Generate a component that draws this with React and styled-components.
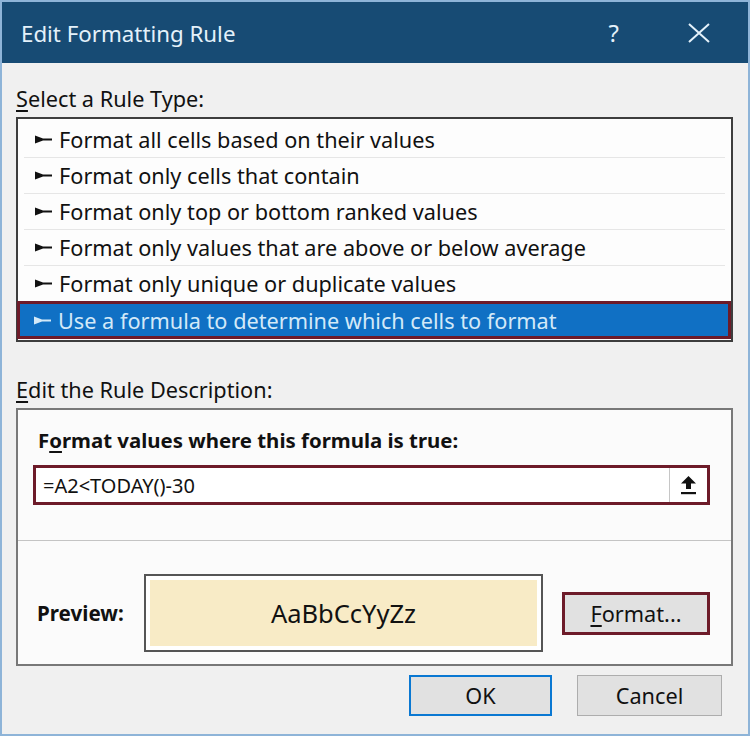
import React from 'react';
import styled, { createGlobalStyle } from 'styled-components';

const GlobalStyle = createGlobalStyle`
  html, body {
    margin: 0;
    padding: 0;
    background: #ffffff;
  }
  body {
    font-family: "Noto Sans", "Open Sans", sans-serif;
  }
`;

const ruleTypes = [
  'Format all cells based on their values',
  'Format only cells that contain',
  'Format only top or bottom ranked values',
  'Format only values that are above or below average',
  'Format only unique or duplicate values',
  'Use a formula to determine which cells to format',
];

const Arrow = () => (
  <svg width="17" height="9" viewBox="0 0 17 9">
    <polygon points="0,0.5 8,3.5 17,3.5 17,5.5 8,5.5 0,8.5" fill="currentColor" />
  </svg>
);

const UploadIcon = () => (
  <svg width="17" height="19" viewBox="0 0 17 19">
    <polygon points="8.5,0 16,7.5 11,7.5 11,13 6,13 6,7.5 1,7.5" fill="#111" />
    <rect x="1" y="16" width="15" height="2.2" fill="#111" />
  </svg>
);

const CloseIcon = () => (
  <svg width="22" height="20" viewBox="0 0 22 20">
    <path d="M1 1 L21 19 M21 1 L1 19" stroke="#e4f1fa" strokeWidth="2" fill="none" />
  </svg>
);

const App = () => {
  return (
    <>
      <GlobalStyle />
      <Dialog>
        <TitleBar>
          <Title>Edit Formatting Rule</Title>
          <TitleButtons>
            <Help>?</Help>
            <CloseIcon />
          </TitleButtons>
        </TitleBar>
        <Body>
          <Label>
            <Key>S</Key>elect a Rule Type:
          </Label>
          <RuleList>
            {ruleTypes.map((text, i) => (
              <RuleRow key={text} selected={i === ruleTypes.length - 1}>
                <Arrow />
                <span>{text}</span>
              </RuleRow>
            ))}
          </RuleList>
          <Label $gap>
            <Key>E</Key>dit the Rule Description:
          </Label>
          <DescBox>
            <BoldLabel>
              F<Key>o</Key>rmat values where this formula is true:
            </BoldLabel>
            <FormulaInput>
              <FormulaText>=A2&lt;TODAY()-30</FormulaText>
              <RefButton>
                <UploadIcon />
              </RefButton>
            </FormulaInput>
            <Separator />
            <PreviewRow>
              <PreviewLabel>Preview:</PreviewLabel>
              <PreviewBox>
                <PreviewFill>AaBbCcYyZz</PreviewFill>
              </PreviewBox>
              <Button $variant="marked">
                <Key>F</Key>ormat...
              </Button>
            </PreviewRow>
          </DescBox>
          <Footer>
            <Button $variant="default">OK</Button>
            <Button>Cancel</Button>
          </Footer>
        </Body>
      </Dialog>
    </>
  );
};

const Dialog = styled.div`
  width: 750px;
  height: 736px;
  box-sizing: border-box;
  border: 2px solid #8eb4d8;
  display: flex;
  flex-direction: column;
  background: #f0f0f0;
  overflow: hidden;
`;

const TitleBar = styled.div`
  height: 61px;
  flex-shrink: 0;
  background: #174b74;
  display: flex;
  align-items: center;
  justify-content: space-between;
  padding: 0 38px 0 19px;
`;

const Title = styled.div`
  color: #e4f1fa;
  font-size: 22.3px;
  line-height: 1;
  padding-top: 3px;
`;

const TitleButtons = styled.div`
  display: flex;
  align-items: center;
  gap: 69px;
  color: #e4f1fa;
`;

const Help = styled.span`
  font-size: 24px;
  line-height: 1;
`;

const Body = styled.div`
  flex: 1;
  display: flex;
  flex-direction: column;
  padding: 22px 15px 0 14px;
  color: #111;
`;

const Label = styled.div`
  font-size: 21.7px;
  line-height: 27px;
  margin-top: ${(p) => (p.$gap ? '34px' : '0')};
  margin-bottom: 5px;
`;

const Key = styled.u`
  text-decoration-thickness: 1.5px;
  text-underline-offset: 3px;
`;

const RuleList = styled.div`
  height: 225px;
  box-sizing: border-box;
  border: 2px solid #3d3d3d;
  background: #fdfdfd;
  padding-top: 3px;
  display: flex;
  flex-direction: column;
`;

const RuleRow = styled.div`
  height: 36px;
  box-sizing: border-box;
  display: flex;
  align-items: center;
  gap: 7px;
  font-size: 21.7px;
  white-space: nowrap;
  ${(p) =>
    p.selected
      ? `
    margin: -1px 0 0 -1px;
    padding-left: 14px;
    background: #1070c4;
    border: 3px solid #6d1b29;
    color: #d3e9f8;
    height: 38px;
  `
      : `
    margin: 0 6px;
    padding-left: 11px;
    border-bottom: 1px solid #e6e6e6;
    color: #111;
  `}
`;

const DescBox = styled.div`
  box-sizing: border-box;
  border: 2px solid #787878;
  background: #fbfbfb;
  padding: 17px 0 12px;
  display: flex;
  flex-direction: column;
`;

const BoldLabel = styled.div`
  font-size: 20.4px;
  font-weight: 700;
  line-height: 27px;
  padding-left: 20px;
`;

const FormulaInput = styled.div`
  margin: 11px 21px 0 15px;
  height: 40px;
  box-sizing: border-box;
  border: 3px solid #6d1b29;
  background: #ffffff;
  display: flex;
  align-items: stretch;
`;

const FormulaText = styled.div`
  flex: 1;
  display: flex;
  align-items: center;
  padding-left: 7px;
  font-size: 20px;
`;

const RefButton = styled.div`
  width: 37px;
  border-left: 1px solid #c6c6c6;
  display: flex;
  align-items: center;
  justify-content: center;
`;

const Separator = styled.div`
  height: 1px;
  background: #c4c4c4;
  margin-top: 35px;
`;

const PreviewRow = styled.div`
  margin-top: 33px;
  display: flex;
  align-items: center;
  padding-left: 19px;
`;

const PreviewLabel = styled.div`
  font-size: 20.6px;
  font-weight: 700;
  width: 107px;
`;

const PreviewBox = styled.div`
  width: 399px;
  height: 78px;
  box-sizing: border-box;
  border: 2px solid #555555;
  background: #ffffff;
  padding: 4px;
`;

const PreviewFill = styled.div`
  height: 100%;
  background: #f8ebc6;
  display: flex;
  align-items: center;
  justify-content: center;
  font-size: 25.5px;
`;

const Button = styled.div`
  width: ${(p) => (p.$variant === 'marked' ? '148px' : p.$variant === 'default' ? '143px' : '145px')};
  height: ${(p) => (p.$variant === 'marked' ? '43px' : '41px')};
  margin-left: ${(p) => (p.$variant === 'marked' ? '19px' : '0')};
  box-sizing: border-box;
  background: #e1e1e1;
  border: ${(p) =>
    p.$variant === 'marked'
      ? '3px solid #6d1b29'
      : p.$variant === 'default'
      ? '2px solid #0a78d2'
      : '1px solid #adadad'};
  display: flex;
  align-items: center;
  justify-content: center;
  font-size: 21.7px;
  color: #111;
`;

const Footer = styled.div`
  display: flex;
  justify-content: flex-end;
  gap: 25px;
  margin-top: 9px;
  padding-right: 11px;
`;

export default App;
